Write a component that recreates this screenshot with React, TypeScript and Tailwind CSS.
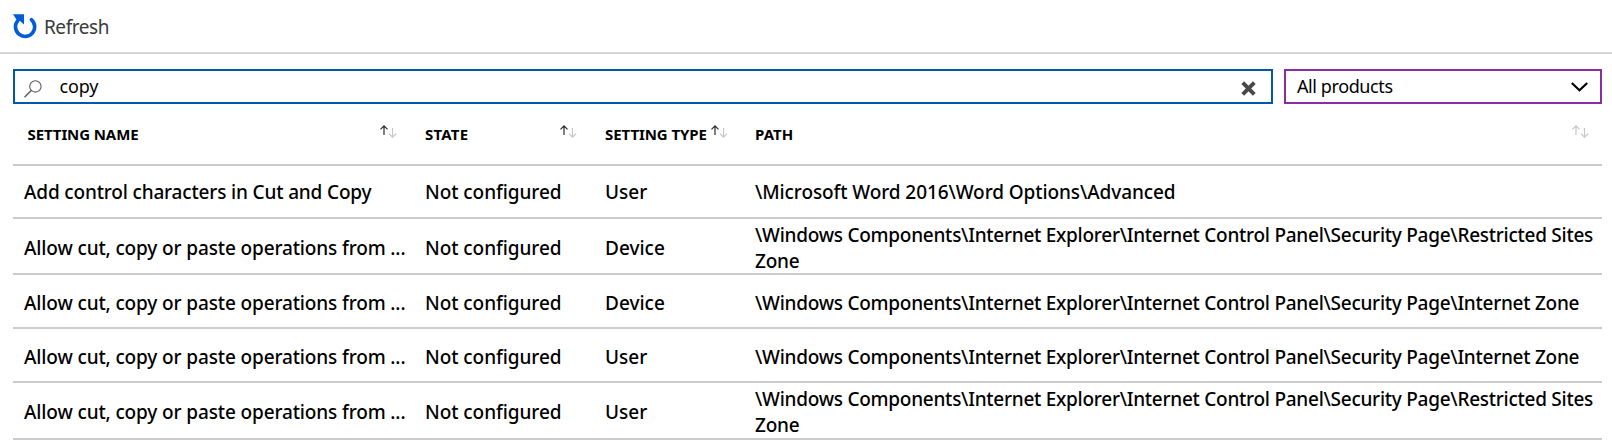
type Row = {
  name: string;
  type: string;
  path: string;
  height: string;
  cellTop: string;
  nameTracking: string;
  pathTop: string;
  pathTracking: string;
};

const CUT_COPY = "Allow cut, copy or paste operations from ...";
const ZONES = "\\Windows Components\\Internet Explorer\\Internet Control Panel\\Security Page\\";

const rows: Row[] = [
  {
    name: "Add control characters in Cut and Copy",
    type: "User",
    path: "\\Microsoft Word 2016\\Word Options\\Advanced",
    height: "h-[53px]",
    cellTop: "pt-[13px]",
    nameTracking: "tracking-[-0.16px]",
    pathTop: "pt-[13px]",
    pathTracking: "tracking-[-0.09px]",
  },
  {
    name: CUT_COPY,
    type: "Device",
    path: ZONES + "Restricted Sites Zone",
    height: "h-[56px]",
    cellTop: "pt-[16px]",
    nameTracking: "tracking-[-0.13px]",
    pathTop: "pt-[3px]",
    pathTracking: "tracking-[-0.26px]",
  },
  {
    name: CUT_COPY,
    type: "Device",
    path: ZONES + "Internet Zone",
    height: "h-[54px]",
    cellTop: "pt-[15px]",
    nameTracking: "tracking-[-0.13px]",
    pathTop: "pt-[15px]",
    pathTracking: "tracking-[-0.26px]",
  },
  {
    name: CUT_COPY,
    type: "User",
    path: ZONES + "Internet Zone",
    height: "h-[54px]",
    cellTop: "pt-[15px]",
    nameTracking: "tracking-[-0.13px]",
    pathTop: "pt-[15px]",
    pathTracking: "tracking-[-0.26px]",
  },
  {
    name: CUT_COPY,
    type: "User",
    path: ZONES + "Restricted Sites Zone",
    height: "h-[57px]",
    cellTop: "pt-[16px]",
    nameTracking: "tracking-[-0.13px]",
    pathTop: "pt-[3px]",
    pathTracking: "tracking-[-0.26px]",
  },
];

function RefreshIcon() {
  return (
    <svg width="24" height="25" viewBox="0 0 24 25" className="shrink-0">
      <path d="M18.4 5.6A9.6 9.6 0 1 1 4.6 6.8" fill="none" stroke="#015cda" strokeWidth="3.6" strokeLinecap="round" />
      <path d="M0 0.3H11V10.6L7.6 7.4L3.6 5.8Z" fill="#015cda" />
    </svg>
  );
}

function SearchIcon() {
  return (
    <svg width="18" height="18" viewBox="0 0 18 18" className="shrink-0" fill="none" stroke="#5c5c5c">
      <circle cx="11.4" cy="6.4" r="5.7" strokeWidth="1.1" />
      <path d="M7.2 10.5L0.5 17.3" strokeWidth="1.5" />
    </svg>
  );
}

function ClearIcon() {
  return (
    <svg width="15" height="15" viewBox="0 0 14 14" className="shrink-0">
      <path d="M1.6 1.6L12.4 12.4M12.4 1.6L1.6 12.4" stroke="#494949" strokeWidth="3.7" />
    </svg>
  );
}

function SortIcon({ active = true }: { active?: boolean }) {
  return (
    <svg width="17" height="13" viewBox="0 0 17 13" className="mt-px shrink-0" fill="none" strokeWidth="1.2">
      <path d="M4 10V0.8M0.5 4.4L4 0.9L7.5 4.4" stroke={active ? "#2b2b2b" : "#c6c6c6"} />
      <path d="M12.5 3V12.2M8.9 8.6L12.5 12.1L16.1 8.6" stroke="#c6c6c6" />
    </svg>
  );
}

const grid = "grid grid-cols-[412px_180px_150px_847px]";

export default function App() {
  return (
    <div className="h-[445px] w-[1612px] overflow-hidden bg-white font-['Noto_Sans',sans-serif] text-black">
      <header className="flex h-[54px] border-b-2 border-[#d6d6d6] pl-[13px]">
        <div className="pt-[14px]">
          <RefreshIcon />
        </div>
        <span className="pt-[14px] pl-[7px] text-[19px] leading-[26px] tracking-[-0.45px] text-[#3a3a3a]">Refresh</span>
      </header>

      <div className="flex gap-[11px] pt-[15px] pl-[13px]">
        <div className="flex h-[35px] w-[1260px] border-2 border-[#0058ad] pr-[15px] pl-[9px]">
          <div className="pt-[9px]">
            <SearchIcon />
          </div>
          <span className="flex-1 pt-[2px] pl-[17.5px] text-[18px] leading-[26px] tracking-[-0.2px]">copy</span>
          <div className="pt-[10px]">
            <ClearIcon />
          </div>
        </div>
        <div className="flex h-[35px] w-[318px] justify-between border-2 border-[#8a2da5] pr-[12px] pl-[11px]">
          <span className="pt-[2px] text-[18px] leading-[26px] tracking-[-0.4px]">All products</span>
          <svg width="17" height="10" viewBox="0 0 17 10" className="mt-[11px] shrink-0">
            <path d="M0.8 0.9L8.5 8.2L16.2 0.9" fill="none" stroke="#000" strokeWidth="2.1" />
          </svg>
        </div>
      </div>

      <div className="ml-[13px] w-[1589px]">
        <div className={`${grid} h-[62px] border-b-2 border-[#cbcbcb] text-[15px] leading-[20px] font-bold`}>
          <div className="flex justify-between pt-[20px] pr-[28px] pl-[14.5px]">
            <span className="tracking-[-0.1px]">SETTING NAME</span>
            <SortIcon />
          </div>
          <div className="flex justify-between pt-[20px] pr-[28px]">
            <span className="tracking-[0.2px]">STATE</span>
            <SortIcon />
          </div>
          <div className="flex justify-between pt-[20px] pr-[27px]">
            <span className="tracking-[-0.08px] whitespace-nowrap">SETTING TYPE</span>
            <SortIcon />
          </div>
          <div className="flex justify-between pt-[20px] pr-[13px]">
            <span className="tracking-[0.1px]">PATH</span>
            <SortIcon active={false} />
          </div>
        </div>

        {rows.map((row, i) => (
          <div
            key={i}
            className={`${grid} ${row.height} border-b-2 border-[#cbcbcb] text-[19px] leading-[26px] font-medium whitespace-nowrap`}
          >
            <div className={`${row.cellTop} ${row.nameTracking} pl-[11px]`}>{row.name}</div>
            <div className={`${row.cellTop} tracking-[-0.06px]`}>Not configured</div>
            <div className={row.cellTop}>{row.type}</div>
            <div className={`${row.pathTop} ${row.pathTracking} whitespace-normal`}>{row.path}</div>
          </div>
        ))}
      </div>
    </div>
  );
}
